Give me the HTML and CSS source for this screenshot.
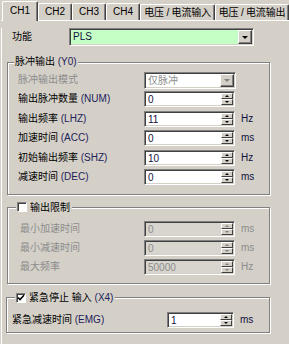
FILE: index.html
```html
<!DOCTYPE html>
<html lang="zh-CN">
<head>
  <meta charset="UTF-8">
  <title>CH1 设置</title>
  <link rel="stylesheet" href="styles.css">
</head>
<body>
  <div class="tabs">
    <div class="tab active">CH1</div>
    <div class="tab">CH2</div>
    <div class="tab">CH3</div>
    <div class="tab">CH4</div>
    <div class="tab wide">电压 / 电流输入</div>
    <div class="tab wide last">电压 / 电流输出</div>
  </div>

  <div class="panel">
    <div class="func-row">
      <span class="func-label">功能</span>
      <div class="combo func-combo"><span class="combo-text">PLS</span><span class="drop"></span></div>
    </div>

    <fieldset class="group g1">
      <legend>脉冲输出 <span class="code">(Y0)</span></legend>
      <div class="rows">
        <div class="row off">
          <span class="label">脉冲输出模式</span>
          <div class="combo mode-combo"><span class="combo-text">仅脉冲</span><span class="drop"></span></div>
        </div>
        <div class="row">
          <span class="label">输出脉冲数量 <span class="code">(NUM)</span></span>
          <div class="spin"><span class="val">0</span><span class="btns"><span class="up"></span><span class="down"></span></span></div>
        </div>
        <div class="row">
          <span class="label">输出频率 <span class="code">(LHZ)</span></span>
          <div class="spin"><span class="val">11</span><span class="btns"><span class="up"></span><span class="down"></span></span></div>
          <span class="unit">Hz</span>
        </div>
        <div class="row">
          <span class="label">加速时间 <span class="code">(ACC)</span></span>
          <div class="spin"><span class="val">0</span><span class="btns"><span class="up"></span><span class="down"></span></span></div>
          <span class="unit">ms</span>
        </div>
        <div class="row">
          <span class="label">初始输出频率 <span class="code">(SHZ)</span></span>
          <div class="spin"><span class="val">10</span><span class="btns"><span class="up"></span><span class="down"></span></span></div>
          <span class="unit">Hz</span>
        </div>
        <div class="row">
          <span class="label">减速时间 <span class="code">(DEC)</span></span>
          <div class="spin"><span class="val">0</span><span class="btns"><span class="up"></span><span class="down"></span></span></div>
          <span class="unit">ms</span>
        </div>
      </div>
    </fieldset>

    <fieldset class="group g2">
      <legend><span class="check"></span>输出限制</legend>
      <div class="rows">
        <div class="row off">
          <span class="label">最小加速时间</span>
          <div class="spin"><span class="val">0</span><span class="btns"><span class="up"></span><span class="down"></span></span></div>
          <span class="unit">ms</span>
        </div>
        <div class="row off">
          <span class="label">最小减速时间</span>
          <div class="spin"><span class="val">0</span><span class="btns"><span class="up"></span><span class="down"></span></span></div>
          <span class="unit">ms</span>
        </div>
        <div class="row off">
          <span class="label">最大频率</span>
          <div class="spin"><span class="val">50000</span><span class="btns"><span class="up"></span><span class="down"></span></span></div>
          <span class="unit">Hz</span>
        </div>
      </div>
    </fieldset>

    <fieldset class="group g3">
      <legend><span class="check"><svg viewBox="0 0 8 8" width="8" height="8"><path d="M1 3.5 L3 5.5 L7 1.2" fill="none" stroke="#000" stroke-width="1.6"/></svg></span>紧急停止 输入 <span class="code">(X4)</span></legend>
      <div class="rows">
        <div class="row">
          <span class="label">紧急减速时间 <span class="code">(EMG)</span></span>
          <div class="spin"><span class="val">1</span><span class="btns"><span class="up"></span><span class="down"></span></span></div>
          <span class="unit">ms</span>
        </div>
      </div>
    </fieldset>
  </div>
</body>
</html>
```

FILE: styles.css
```css
body {
  margin: 0;
  width: 289px;
  height: 344px;
  overflow: hidden;
  background: #d4d0c8;
  font: 10px/12px "Liberation Sans", "Noto Sans CJK SC", sans-serif;
  color: #000;
}

/* tab strip */
.tabs {
  display: flex;
  align-items: flex-end;
  height: 20px;
  margin-left: 1px;
  padding-left: 1px;
  border-bottom: 1px solid #fff;
}
.tab {
  height: 16px;
  line-height: 16px;
  padding: 0 6px;
  border: 1px solid #fff;
  border-bottom: 0;
  border-right-color: #404040;
  box-shadow: inset -1px 0 #808080;
  border-radius: 2px 2px 0 0;
  white-space: nowrap;
}
.tab.wide {
  width: 76px;
  box-sizing: border-box;
  padding: 0;
  text-align: center;
  letter-spacing: -0.2px;
}
.tab.last {
  width: 75px;
}
.tab.active {
  position: relative;
  z-index: 1;
  height: 19px;
  line-height: 17px;
  margin-bottom: -1px;
  padding: 0 7px;
  background: #d4d0c8;
}

.panel {
  margin-left: 1px;
  border-left: 1px solid #fff;
  height: 323px;
}

.func-row {
  display: flex;
  align-items: center;
  height: 18px;
  margin-top: 7px;
  padding-left: 10px;
}
.func-label {
  width: 57px;
}

/* sunken boxes */
.combo, .spin {
  display: flex;
  box-sizing: border-box;
  background: #fff;
  border: 1px solid;
  border-color: #808080 #fff #fff #808080;
  box-shadow: inset 1px 1px #404040, inset -1px -1px #d4d0c8;
  padding: 1px;
}
.combo {
  height: 18px;
}
.func-combo {
  width: 185px;
  background: #c6ffc6;
}
.mode-combo {
  width: 92px;
  height: 17px;
}
.combo-text, .val {
  flex: 1;
  padding-left: 2px;
  line-height: 14px;
  color: #101040;
}
.drop {
  display: flex;
  align-items: center;
  justify-content: center;
  width: 14px;
  box-sizing: border-box;
  background: #d4d0c8;
  border: 1px solid;
  border-color: #fff #404040 #404040 #fff;
  box-shadow: inset -1px -1px #808080;
}
.drop::after {
  content: "";
  border-left: 3px solid transparent;
  border-right: 3px solid transparent;
  border-top: 3px solid #000;
}

.spin {
  width: 91px;
  height: 16px;
}
.btns {
  display: flex;
  flex-direction: column;
  width: 12px;
}
.btns span {
  flex: 1;
  display: flex;
  align-items: center;
  justify-content: center;
  background: #d4d0c8;
  border: 1px solid;
  border-color: #fff #404040 #404040 #fff;
}
.btns .up::after {
  content: "";
  border-left: 2px solid transparent;
  border-right: 2px solid transparent;
  border-bottom: 2px solid #000;
}
.btns .down::after {
  content: "";
  border-left: 2px solid transparent;
  border-right: 2px solid transparent;
  border-top: 2px solid #000;
}

/* group boxes */
.group {
  width: 263px;
  box-sizing: border-box;
  min-inline-size: 0;
  margin: 0 0 0 5px;
  padding: 0;
  border: 1px solid #808080;
  box-shadow: inset 1px 1px #fff, 1px 1px #fff;
}
.group legend {
  height: 14px;
  line-height: 14px;
  margin-left: 6px;
  padding: 0 1px;
  background: #d4d0c8;
}
.g1 { margin-top: 9px; }
.g2 { margin-top: 6px; }
.g3 {
  width: 264px;
  margin-top: 7px;
  margin-left: 4px;
}
.g2 legend, .g3 legend {
  margin-left: 8px;
  padding: 0 2px 0 1px;
}

.rows {
  display: flex;
  flex-direction: column;
  gap: 3.4px;
  padding: 3px 0 9px 10px;
}
.g2 .rows {
  gap: 3px;
  padding: 6px 0 8px 12px;
}
.g3 .rows {
  padding: 7px 0 4px 5px;
}
.row {
  display: flex;
  align-items: center;
  height: 16px;
}
.label {
  width: 126px;
  flex: none;
}
.g2 .label { width: 124px; }
.g3 .label { width: 155px; }
.g3 .spin { width: 67px; }

.unit {
  margin-left: 6px;
  color: #101040;
}
.code {
  color: #22225a;
}

.check {
  display: inline-flex;
  align-items: center;
  justify-content: center;
  width: 10px;
  height: 10px;
  box-sizing: border-box;
  margin-right: 3px;
  vertical-align: -1px;
  background: #fff;
  border: 1px solid;
  border-color: #808080 #fff #fff #808080;
  box-shadow: inset 1px 1px #404040;
}

/* disabled look */
.off, .off .val, .off .unit, .off .combo-text {
  color: #8c8c8c;
}
.g2 .spin {
  background: #d8d5ce;
}
.off .drop::after { border-top-color: #808080; }
.off .btns .up::after { border-bottom-color: #808080; }
.off .btns .down::after { border-top-color: #808080; }
```
